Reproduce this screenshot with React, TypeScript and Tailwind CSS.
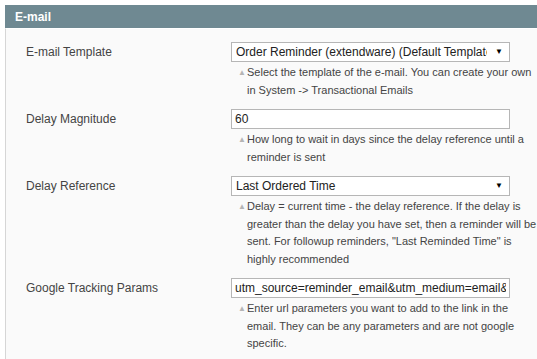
import React from 'react';

type Row = {
  label: string;
  kind: 'select' | 'input';
  value: string;
  note: string;
};

const ROWS: Row[] = [
  {
    label: 'E-mail Template',
    kind: 'select',
    value: 'Order Reminder (extendware) (Default Template)',
    note: 'Select the template of the e-mail. You can create your own in System -> Transactional Emails',
  },
  {
    label: 'Delay Magnitude',
    kind: 'input',
    value: '60',
    note: 'How long to wait in days since the delay reference until a reminder is sent',
  },
  {
    label: 'Delay Reference',
    kind: 'select',
    value: 'Last Ordered Time',
    note: 'Delay = current time - the delay reference. If the delay is greater than the delay you have set, then a reminder will be sent. For followup reminders, "Last Reminded Time" is highly recommended',
  },
  {
    label: 'Google Tracking Params',
    kind: 'input',
    value: 'utm_source=reminder_email&utm_medium=email&utm_campaign=reminder',
    note: 'Enter url parameters you want to add to the link in the email. They can be any parameters and are not google specific.',
  },
];

function Field({ row }: { row: Row }) {
  if (row.kind === 'select') {
    return (
      <div className="flex h-[20px] w-[279px] items-center border border-[#b6b6b6] bg-white pl-[4px] pr-[6px] text-[12px] text-[#222]">
        <span className="flex-1 overflow-hidden whitespace-nowrap">{row.value}</span>
        <span className="ml-[8px] text-[8px] leading-none text-black">▼</span>
      </div>
    );
  }
  return (
    <input
      readOnly
      value={row.value}
      className="block h-[20px] w-[279px] border border-[#b6b6b6] bg-white px-[3px] text-[12px] text-[#222] outline-none"
    />
  );
}

export default function App() {
  return (
    <div className="h-[359px] w-[537px] overflow-hidden bg-white pl-[5px] pt-[5px] font-['Liberation_Sans',Arial,sans-serif]">
      <div className="flex h-[23px] items-center bg-[#6f8992] pl-[10px] text-[12px] font-bold text-white">
        E-mail
      </div>
      <div className="h-full border-l border-t border-[#d6d6d6] border-t-white bg-[#fafafa] pl-[20px] pt-[13px]">
        {ROWS.map((row) => (
          <div key={row.label} className="flex pb-[10px]">
            <div className="w-[205px] text-[12px] leading-[20px] text-[#444]">{row.label}</div>
            <div>
              <Field row={row} />
              <div className="mt-[2px] flex w-[306px] text-[11px] leading-[17.5px] text-[#444]">
                <span className="w-[16px] shrink-0 pl-[7px] text-[8px] text-[#b5b5b5]">▲</span>
                <span>{row.note}</span>
              </div>
            </div>
          </div>
        ))}
      </div>
    </div>
  );
}
